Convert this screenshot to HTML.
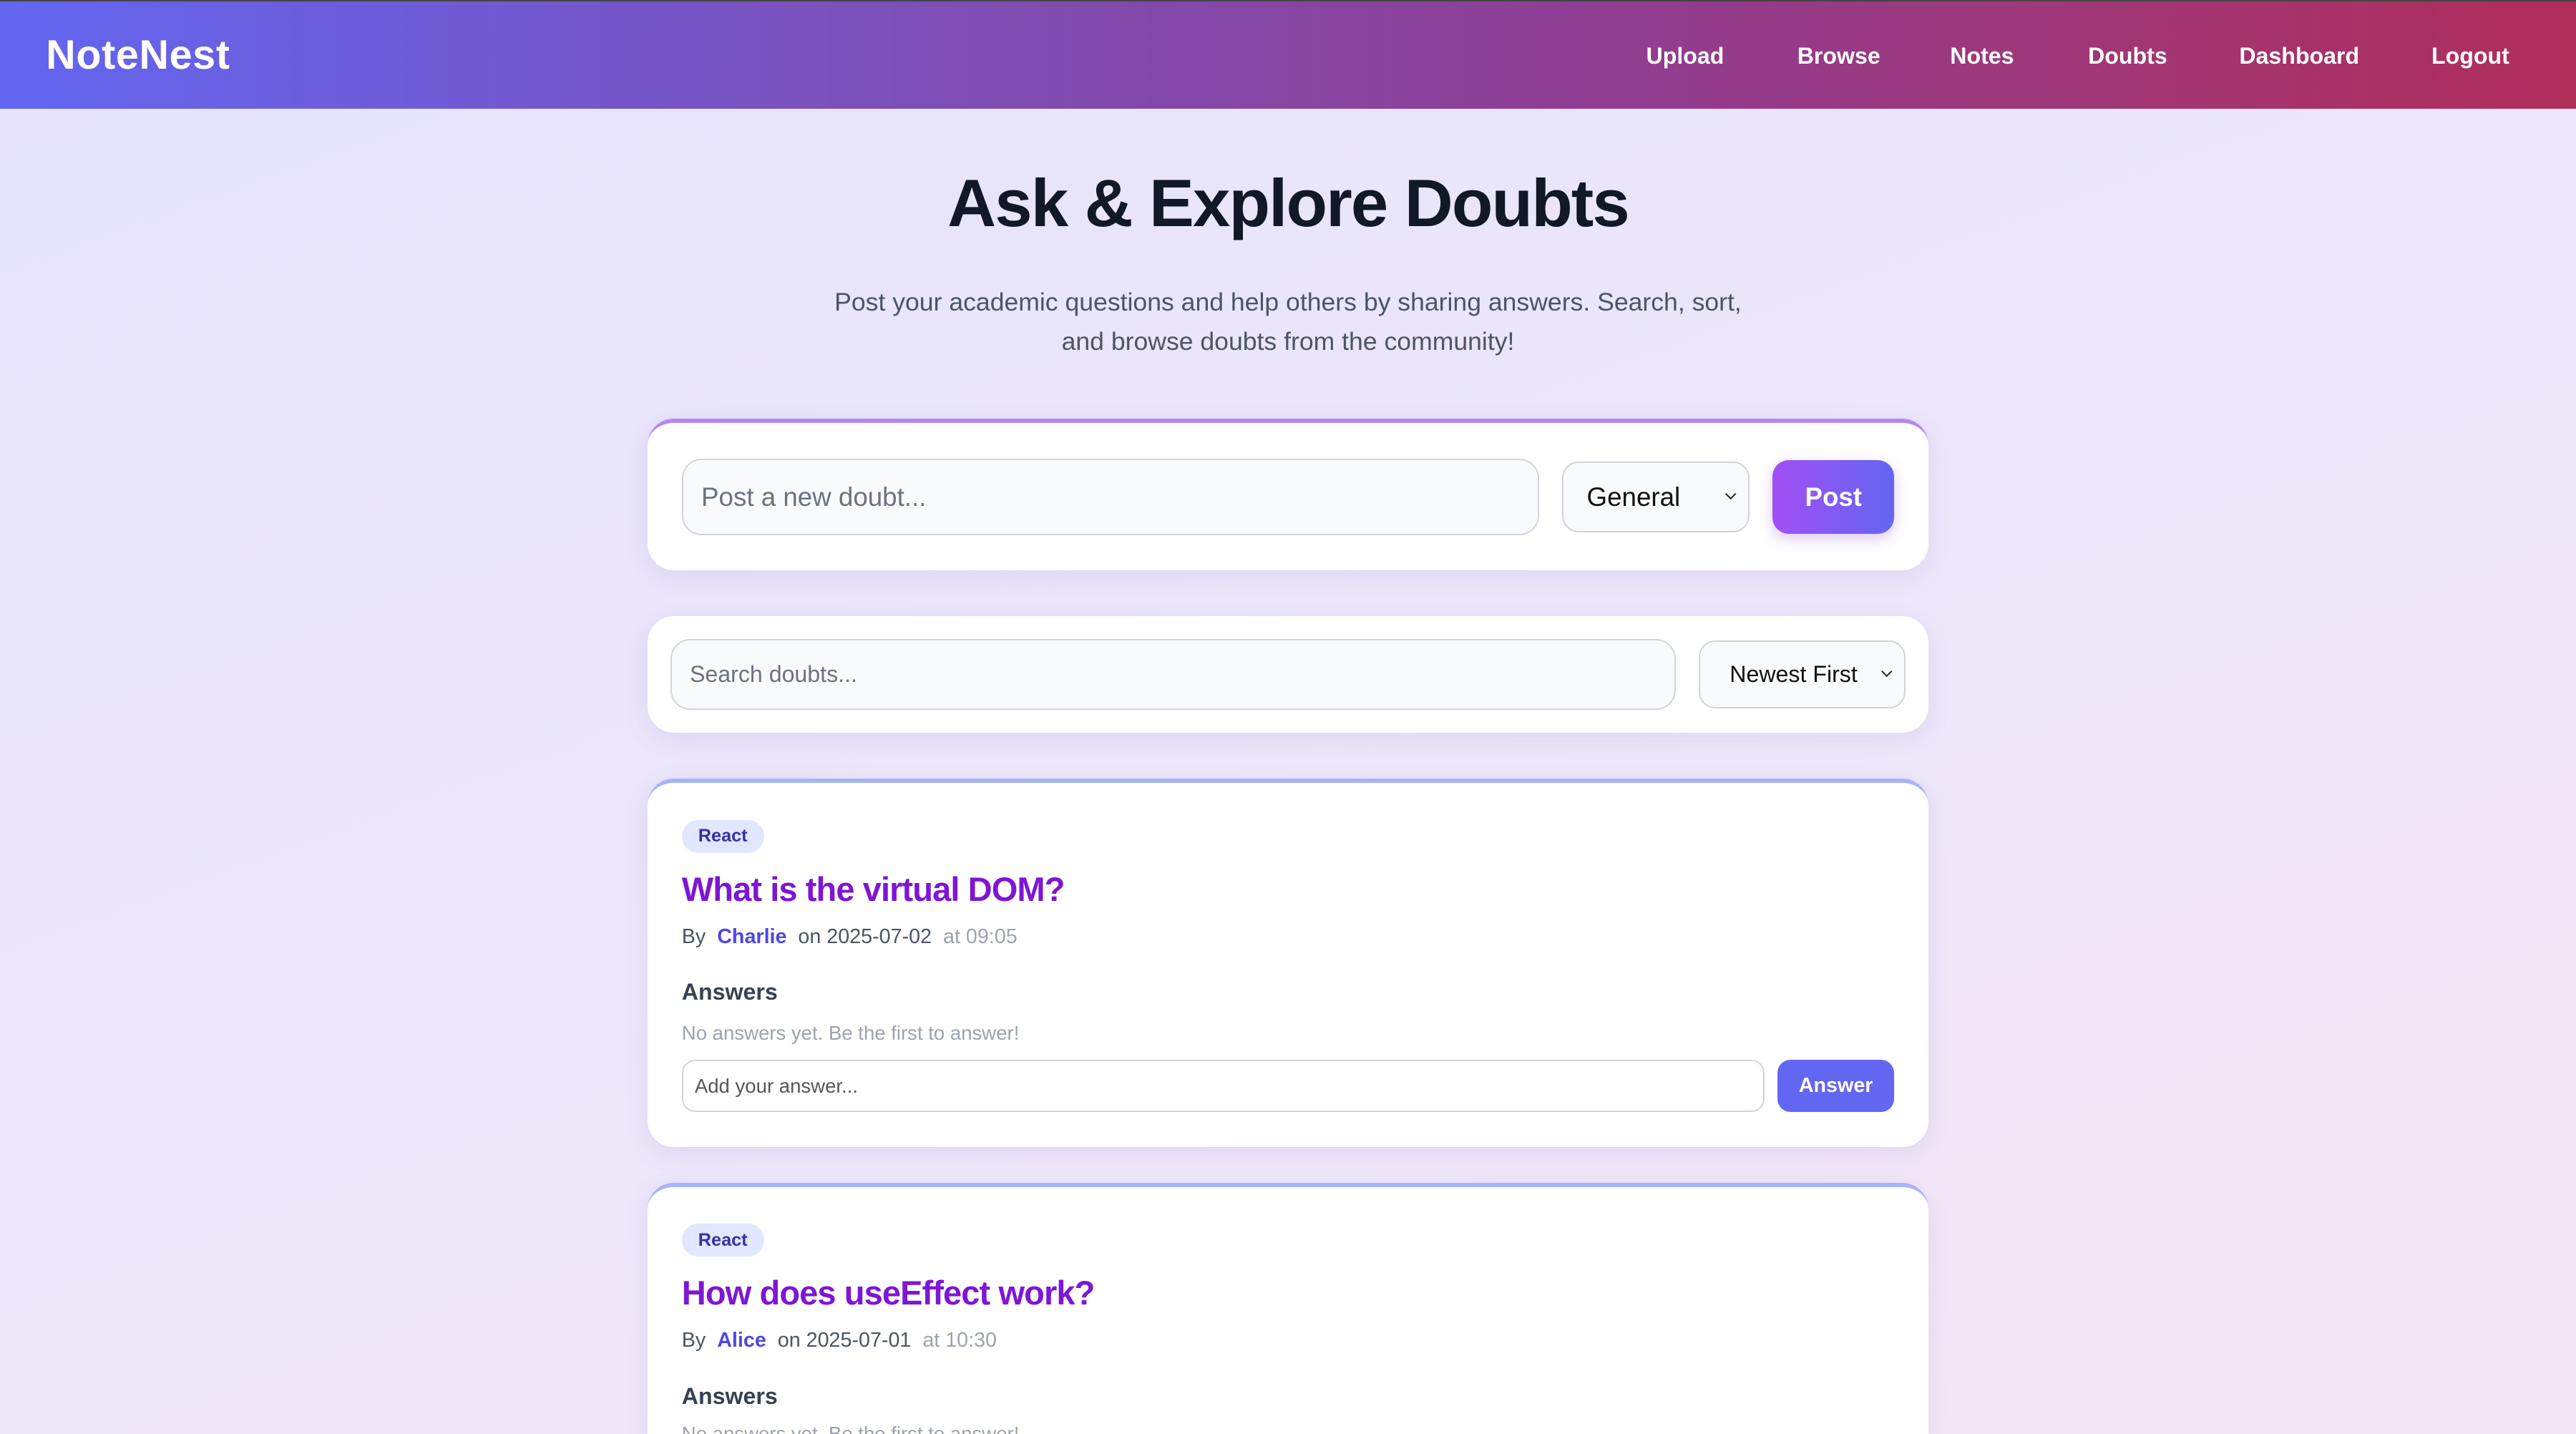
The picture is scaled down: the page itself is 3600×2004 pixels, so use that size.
<!DOCTYPE html>
<html><head><meta charset="utf-8"><style>
*{box-sizing:border-box;margin:0;padding:0}
html{width:3600px;height:2004px;overflow:hidden;background:linear-gradient(160deg,#e5e3fb 0%,#ece6fa 50%,#f4e6f4 100%)}
body{width:3600px;height:2004px;overflow:hidden;font-family:"Liberation Sans",sans-serif}
#r{position:absolute;left:0;top:0;width:1568px;height:873px;overflow:hidden;zoom:2.29592}
.a{position:absolute}
.nav{left:0;top:0;width:1568px;height:66px;background:linear-gradient(90deg,#6366f1 0%,#7c4fb8 35%,#8e3f95 60%,#b02e5a 100%);border-top:1px solid #444}
.logo{left:28px;top:19px;color:#fff;font-weight:bold;font-size:25px;letter-spacing:0.3px}
.nl{top:26px;color:#fff;font-weight:bold;font-size:14px}
.card{background:#fff;border-radius:16px;box-shadow:0 4px 14px rgba(120,100,200,.12)}
.inp{background:#f9fafb;border:1px solid #d1d5db;border-radius:12px;color:#6b7280;display:flex;align-items:center}
.sel{background:#f9fafb;border:1px solid #d1d5db;border-radius:10px;color:#111;display:flex;align-items:center}
.chev{position:absolute;right:8px;top:50%;margin-top:-4px;width:5px;height:5px;border-right:1.2px solid #222;border-bottom:1.2px solid #222;transform:rotate(45deg)}
</style></head><body><div id="r">
<div class="a nav"></div>
<div class="a logo">NoteNest</div>
<div class="a nl" style="left:1002px">Upload</div>
<div class="a nl" style="left:1094px">Browse</div>
<div class="a nl" style="left:1187px">Notes</div>
<div class="a nl" style="left:1271px">Doubts</div>
<div class="a nl" style="left:1363px">Dashboard</div>
<div class="a nl" style="left:1480px">Logout</div>

<div class="a" style="left:0;width:1568px;top:100px;text-align:center;font-size:41px;font-weight:bold;color:#111827;letter-spacing:-0.8px">Ask &amp; Explore Doubts</div>
<div class="a" style="left:494px;width:580px;top:172px;text-align:center;font-size:15.5px;line-height:24px;color:#4b5563">Post your academic questions and help others by sharing answers. Search, sort,<br>and browse doubts from the community!</div>

<div class="a card" style="left:394px;top:255px;width:780px;height:92px;border-top:3px solid #b388f5"></div>
<div class="a inp" style="left:415px;top:279px;width:522px;height:47px;padding-left:11px;font-size:16px">Post a new doubt...</div>
<div class="a sel" style="left:951px;top:281px;width:114px;height:43px;padding-left:14px;font-size:16px">General<span class="chev"></span></div>
<div class="a" style="left:1079px;top:280px;width:74px;height:45px;border-radius:10px;background:linear-gradient(90deg,#a24ff5,#6366f1);color:#fff;font-weight:bold;font-size:16px;display:flex;align-items:center;justify-content:center;box-shadow:0 3px 8px rgba(140,80,240,.3)">Post</div>

<div class="a card" style="left:394px;top:375px;width:780px;height:71px"></div>
<div class="a inp" style="left:408px;top:389px;width:612px;height:43px;padding-left:11px;font-size:14px">Search doubts...</div>
<div class="a sel" style="left:1034px;top:390px;width:126px;height:41px;padding-left:18px;font-size:14px">Newest First<span class="chev"></span></div>

<div class="a card" style="left:394px;top:474px;width:780px;height:224px;border-top:3px solid #a5b4fc"></div>
<div class="a" style="left:415px;top:499px;width:50px;height:20px;border-radius:10px;background:#e0e7ff;color:#3730a3;font-size:11px;font-weight:bold;display:flex;align-items:center;justify-content:center">React</div>
<div class="a" style="left:415px;top:529px;font-size:20.5px;font-weight:bold;color:#7e16d4;letter-spacing:-0.4px">What is the virtual DOM?</div>
<div class="a" style="left:415px;top:563px;font-size:12.5px;color:#4b5563">By&nbsp; <b style="color:#4f46e5;font-weight:600">Charlie</b>&nbsp; on 2025-07-02&nbsp; <span style="color:#9ca3af">at 09:05</span></div>
<div class="a" style="left:415px;top:596px;font-size:14px;font-weight:bold;color:#374151">Answers</div>
<div class="a" style="left:415px;top:622px;font-size:12px;color:#9ca3af">No answers yet. Be the first to answer!</div>
<div class="a inp" style="left:415px;top:645px;width:659px;height:32px;border-radius:8px;background:#fff;padding-left:7px;font-size:12px;color:#555">Add your answer...</div>
<div class="a" style="left:1082px;top:645px;width:71px;height:32px;border-radius:8px;background:#6366f1;color:#fff;font-weight:bold;font-size:12.5px;display:flex;align-items:center;justify-content:center">Answer</div>

<div class="a card" style="left:394px;top:720px;width:780px;height:153px;border-radius:16px 16px 0 0;border-top:3px solid #a5b4fc"></div>
<div class="a" style="left:415px;top:745px;width:50px;height:20px;border-radius:10px;background:#e0e7ff;color:#3730a3;font-size:11px;font-weight:bold;display:flex;align-items:center;justify-content:center">React</div>
<div class="a" style="left:415px;top:775px;font-size:20.5px;font-weight:bold;color:#7e16d4;letter-spacing:-0.4px">How does useEffect work?</div>
<div class="a" style="left:415px;top:809px;font-size:12.5px;color:#4b5563">By&nbsp; <b style="color:#4f46e5;font-weight:600">Alice</b>&nbsp; on 2025-07-01&nbsp; <span style="color:#9ca3af">at 10:30</span></div>
<div class="a" style="left:415px;top:842px;font-size:14px;font-weight:bold;color:#374151">Answers</div>
<div class="a" style="left:415px;top:866px;height:7px;overflow:hidden;font-size:12px;line-height:14px;color:#9ca3af">No answers yet. Be the first to answer!</div>
</div></body></html>
